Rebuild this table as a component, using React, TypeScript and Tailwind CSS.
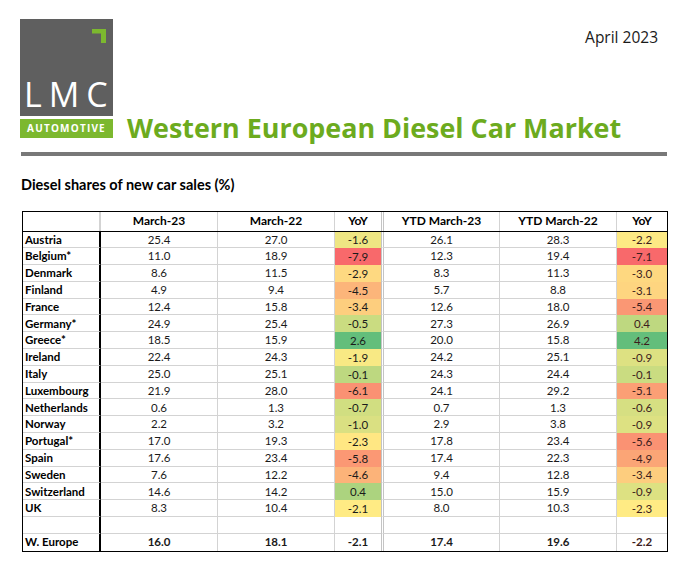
import React from 'react'

type Row = [string, number, number, number, number, number, number]

const rows: Row[] = [
  ['Austria', 25.4, 27.0, -1.6, 26.1, 28.3, -2.2],
  ['Belgium*', 11.0, 18.9, -7.9, 12.3, 19.4, -7.1],
  ['Denmark', 8.6, 11.5, -2.9, 8.3, 11.3, -3.0],
  ['Finland', 4.9, 9.4, -4.5, 5.7, 8.8, -3.1],
  ['France', 12.4, 15.8, -3.4, 12.6, 18.0, -5.4],
  ['Germany*', 24.9, 25.4, -0.5, 27.3, 26.9, 0.4],
  ['Greece*', 18.5, 15.9, 2.6, 20.0, 15.8, 4.2],
  ['Ireland', 22.4, 24.3, -1.9, 24.2, 25.1, -0.9],
  ['Italy', 25.0, 25.1, -0.1, 24.3, 24.4, -0.1],
  ['Luxembourg', 21.9, 28.0, -6.1, 24.1, 29.2, -5.1],
  ['Netherlands', 0.6, 1.3, -0.7, 0.7, 1.3, -0.6],
  ['Norway', 2.2, 3.2, -1.0, 2.9, 3.8, -0.9],
  ['Portugal*', 17.0, 19.3, -2.3, 17.8, 23.4, -5.6],
  ['Spain', 17.6, 23.4, -5.8, 17.4, 22.3, -4.9],
  ['Sweden', 7.6, 12.2, -4.6, 9.4, 12.8, -3.4],
  ['Switzerland', 14.6, 14.2, 0.4, 15.0, 15.9, -0.9],
  ['UK', 8.3, 10.4, -2.1, 8.0, 10.3, -2.3],
]

const total: Row = ['W. Europe', 16.0, 18.1, -2.1, 17.4, 19.6, -2.2]

// excel style 3-colour scale: red -> yellow (median) -> green
const RED = [248, 105, 107]
const YEL = [255, 235, 132]
const GRN = [99, 190, 123]

function makeScale(values: number[]) {
  const sorted = [...values].sort((a, b) => a - b)
  const min = sorted[0]
  const max = sorted[sorted.length - 1]
  const mid = sorted[Math.floor(sorted.length / 2)]
  return (v: number) => {
    let from = YEL
    let to = GRN
    let t = 0
    if (v <= mid) {
      from = RED
      to = YEL
      t = mid === min ? 1 : (v - min) / (mid - min)
    } else {
      t = max === mid ? 0 : (v - mid) / (max - mid)
    }
    const c = from.map((f, i) => Math.round(f + (to[i] - f) * t))
    return `rgb(${c[0]}, ${c[1]}, ${c[2]})`
  }
}

const yoyScale = makeScale(rows.map((r) => r[3]))
const ytdScale = makeScale(rows.map((r) => r[6]))

function Logo() {
  return (
    <div className="flex w-[93px] flex-col">
      <div className="relative flex h-[97px] items-end bg-[#5f5f5f] pb-[5px] pl-[4px]">
        <svg className="absolute right-[7px] top-[10px]" width="14" height="14" viewBox="0 0 14 14">
          <path d="M0 0 H14 V14 H9 V4.5 H0 Z" fill="#7cb82f" />
        </svg>
        <span className="font-['Open_Sans',sans-serif] text-[34px] leading-none tracking-[7px] text-white">LMC</span>
      </div>
      <div className="mt-[3px] flex h-[19px] items-center justify-center bg-[#7cb82f]">
        <span className="font-['Open_Sans',sans-serif] text-[10px] font-bold tracking-[1.2px] text-white">AUTOMOTIVE</span>
      </div>
    </div>
  )
}

function DataRow({ row, bold, blank, last }: { row?: Row; bold?: boolean; blank?: boolean; last?: boolean }) {
  const line = last ? '' : 'border-b border-[#d3d3d3]'
  const weight = bold ? 'font-bold' : ''
  const fmt = (n?: number) => (n === undefined ? '' : n.toFixed(1))
  const colour1 = !blank && !bold && row ? yoyScale(row[3]) : undefined
  const colour2 = !blank && !bold && row ? ytdScale(row[6]) : undefined
  return (
    <div className="flex h-[16.8px] text-[11.5px] leading-none text-[#1a1a1a]">
      <div className={`flex w-[78px] items-center border-r-2 border-r-black pl-[2px] text-[11.5px] font-bold text-black ${line}`}>
        {row?.[0]}
      </div>
      <div className={`flex w-[117px] items-center justify-center border-r border-r-[#d3d3d3] ${line} ${weight}`}>{fmt(row?.[1])}</div>
      <div className={`flex w-[117px] items-center justify-center border-r border-r-[#d3d3d3] ${line} ${weight}`}>{fmt(row?.[2])}</div>
      <div
        className={`flex w-[46px] items-center justify-center ${colour1 ? '' : line} ${weight}`}
        style={colour1 ? { backgroundColor: colour1 } : undefined}
      >
        {fmt(row?.[3])}
      </div>
      <div className={`flex w-[119px] items-center justify-center border-l-[3px] border-r border-double border-l-[#c4c4c4] border-r-[#d3d3d3] ${line} ${weight}`}>
        {fmt(row?.[4])}
      </div>
      <div className={`flex w-[117px] items-center justify-center border-r border-r-[#d3d3d3] ${line} ${weight}`}>{fmt(row?.[5])}</div>
      <div
        className={`flex flex-1 items-center justify-center text-[#3d1d1d] ${colour2 ? '' : line} ${weight}`}
        style={colour2 ? { backgroundColor: colour2 } : undefined}
      >
        {fmt(row?.[6])}
      </div>
    </div>
  )
}

export default function App() {
  const headers = ['March-23', 'March-22', 'YoY', 'YTD March-23', 'YTD March-22', 'YoY']
  const widths = ['w-[117px]', 'w-[117px]', 'w-[46px]', 'w-[119px]', 'w-[117px]', 'flex-1']

  return (
    <div className="h-[573px] w-[689px] overflow-hidden bg-white font-['Lato',sans-serif]">
      <div className="flex pl-[20px] pt-[19px]">
        <Logo />
        <div className="flex flex-1 flex-col justify-between">
          <div className="mr-[31px] mt-[11px] self-end font-['Open_Sans',sans-serif] text-[15.5px] leading-none text-[#1a1a1a]">
            April 2023
          </div>
          <h1 className="ml-[14px] mb-[-4px] font-['Open_Sans',sans-serif] text-[26.9px] font-bold leading-none text-[#6cab1e]">
            Western European Diesel Car Market
          </h1>
        </div>
      </div>

      <div className="ml-[21px] mt-[14px] h-[4px] w-[646px] bg-[#787878]" />

      <h2 className="ml-[21px] mt-[22px] text-[14.5px] font-bold leading-none text-black">Diesel shares of new car sales (%)</h2>

      <div className="ml-[22px] mt-[18px] w-[646px] border border-black">
        <div className="flex h-[20px] border-b border-b-black text-[12px] font-bold leading-none text-black">
          <div className="w-[78px] border-r-2 border-r-[#d3d3d3]" />
          {headers.map((h, i) => (
            <div
              key={i}
              className={`flex items-center justify-center ${widths[i]} ${
                i === 3 ? 'border-l-[3px] border-double border-l-[#c4c4c4] border-r border-r-[#d3d3d3]' : i === 5 ? '' : i === 2 ? '' : 'border-r border-r-[#d3d3d3]'
              }`}
            >
              {h}
            </div>
          ))}
        </div>
        {rows.map((r) => (
          <DataRow key={r[0]} row={r} />
        ))}
        <DataRow blank />
        <DataRow row={total} bold last />
      </div>
    </div>
  )
}
